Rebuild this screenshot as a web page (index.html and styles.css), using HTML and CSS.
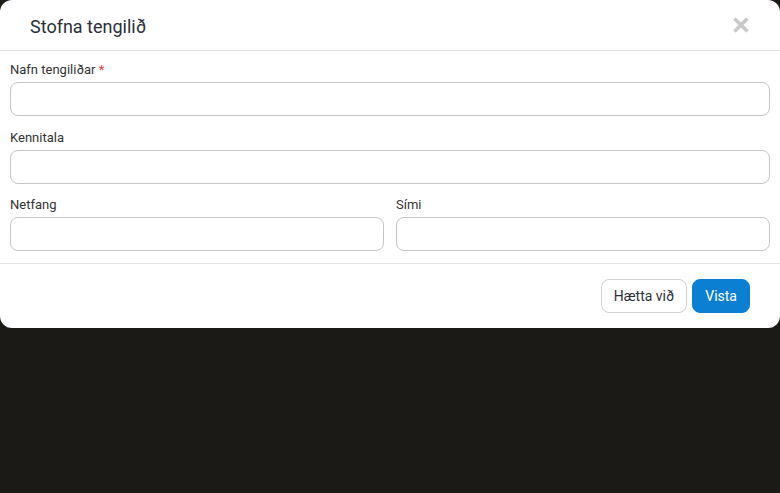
FILE: index.html
```html
<!DOCTYPE html>
<html lang="is">
<head>
<meta charset="utf-8">
<link rel="stylesheet" href="styles.css">
</head>
<body>
<div class="modal">
  <div class="modal-header">
    <h2 class="modal-title">Stofna tengilið</h2>
    <button class="close" aria-label="Loka">
      <svg width="18" height="18" viewBox="0 0 18 18"><path d="M2.5 2.5 L15.5 15.5 M15.5 2.5 L2.5 15.5" stroke="#c9c9c9" stroke-width="3.6" stroke-linecap="butt"/></svg>
    </button>
  </div>
  <div class="modal-body">
    <div class="field">
      <label class="label">Nafn tengiliðar <span class="req">*</span></label>
      <input class="input" type="text">
    </div>
    <div class="field">
      <label class="label">Kennitala</label>
      <input class="input" type="text">
    </div>
    <div class="row">
      <div class="field">
        <label class="label">Netfang</label>
        <input class="input" type="text">
      </div>
      <div class="field">
        <label class="label">Sími</label>
        <input class="input" type="text">
      </div>
    </div>
  </div>
  <div class="modal-footer">
    <button class="btn btn-secondary">Hætta við</button>
    <button class="btn btn-primary">Vista</button>
  </div>
</div>
</body>
</html>
```

FILE: styles.css
```css
html, body {
  margin: 0;
  padding: 0;
  background: #1c1a17;
  height: 100%;
}
body {
  font-family: Roboto, "Liberation Sans", sans-serif;
}
.modal {
  width: 780px;
  background: #fff;
  border-radius: 12px;
  box-sizing: border-box;
}
.modal-header {
  height: 51px;
  border-bottom: 1px solid #e3e3e3;
  display: flex;
  align-items: center;
  justify-content: space-between;
  padding: 0 30px 0 30px;
  box-sizing: border-box;
}
.modal-title {
  margin: 0;
  font-size: 18px;
  font-weight: 400;
  color: #2b2f3a;
  padding-top: 2px;
}
.close {
  border: 0;
  background: none;
  padding: 0;
  margin-top: -1px;
  width: 18px;
  height: 18px;
  display: flex;
}
.modal-body {
  padding: 11px 10px 12px 10px;
  display: flex;
  flex-direction: column;
  gap: 13.5px;
}
.field {
  display: flex;
  flex-direction: column;
  flex: 1;
}
.row {
  display: flex;
  gap: 12px;
}
.label {
  font-size: 13px;
  line-height: 16px;
  color: #333;
  margin-bottom: 4px;
}
.req {
  color: #e53935;
}
.input {
  height: 34px;
  box-sizing: border-box;
  border: 1px solid #c8c5c0;
  border-radius: 8px;
  background: #fff;
  margin: 0;
  padding: 0 10px;
  font: inherit;
}
.modal-footer {
  border-top: 1px solid #e3e3e3;
  padding: 15px 30px 15px 0;
  display: flex;
  justify-content: flex-end;
  gap: 5px;
}
.btn {
  height: 34px;
  border-radius: 8px;
  font-family: Roboto, "Liberation Sans", sans-serif;
  font-size: 14px;
  padding: 0 12px;
  cursor: pointer;
}
.btn-secondary {
  background: #fff;
  border: 1px solid #d4d1cc;
  color: #2b2f3a;
}
.btn-primary {
  background: #0b7fd1;
  border: 1px solid #0b7fd1;
  color: #fff;
  padding: 0 12px;
}
```
